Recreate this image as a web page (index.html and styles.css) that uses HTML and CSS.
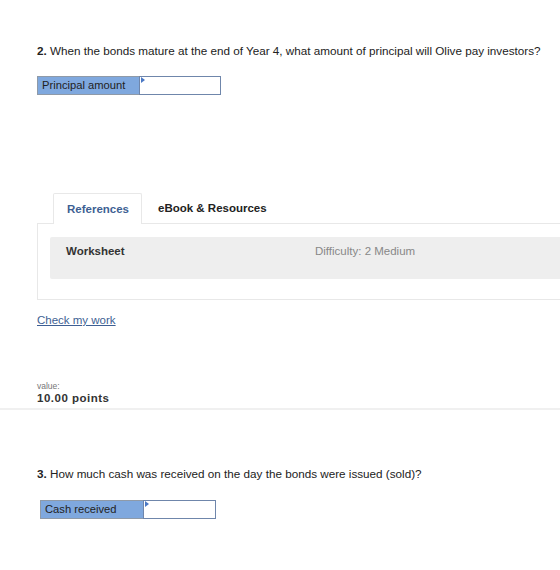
FILE: index.html
```html
<!DOCTYPE html>
<html lang="en">

<head>
    <meta charset="UTF-8">
    <meta name="viewport" content="width=device-width, initial-scale=1.0">

    <title>Bonds - Question 2</title>

    <link rel="stylesheet" href="styles.css">
</head>

<body>
    <main>
        <section class="question q2">
            <p class="prompt"><b>2.</b> When the bonds mature at the end of Year 4, what amount of principal will Olive pay investors?</p>

            <div class="answer">
                <span class="answer-label">Principal amount</span>
                <span class="field"><input type="text" class="answer-input"></span>
            </div>
        </section>

        <div class="tabs">
            <span class="tab active">References</span>
            <span class="tab">eBook &amp; Resources</span>
        </div>

        <div class="panel">
            <div class="ref-row">
                <span class="ref-name">Worksheet</span>
                <span class="ref-level">Difficulty: 2 Medium</span>
            </div>
        </div>

        <a href="#" class="check">Check my work</a>

        <div class="value">
            <p class="value-label">value:</p>
            <p class="points">10.00 points</p>
        </div>
    </main>

    <hr class="divider">

    <main>
        <section class="question q3">
            <p class="prompt"><b>3.</b> How much cash was received on the day the bonds were issued (sold)?</p>

            <div class="answer shifted">
                <span class="answer-label">Cash received</span>
                <span class="field small"><input type="text" class="answer-input"></span>
            </div>
        </section>
    </main>
</body>

</html>
```

FILE: styles.css
```css
* {
    margin: 0;
    padding: 0;
    box-sizing: border-box;
}

body {
    font-family: "Liberation Sans", Arial, sans-serif;
    color: #222;
    background-color: white;
}

main {
    padding-left: 37px;
}

.prompt {
    font-size: 11.7px;
    line-height: 14px;
}

.q2 {
    padding-top: 44px;
}

.q3 {
    padding-top: 57px;
}

.answer {
    display: flex;
    margin-top: 18px;
    height: 19px;
}

.answer.shifted {
    margin-top: 19px;
    margin-left: 3px;
}

.answer-label {
    width: 102px;
    height: 19px;

    background-color: #7fa8de;
    border: solid 1px #8f9aa8;
    border-right: none;

    font-size: 11.2px;
    line-height: 17px;
    padding-left: 4px;
}

.q3 .answer-label {
    width: 103px;
}

.field {
    position: relative;
    display: block;
    width: 82px;
    height: 19px;
}

.field.small {
    width: 73px;
}

/* little blue marker in the corner of the input */
.field::before {
    content: "";
    position: absolute;
    left: 2px;
    top: 1px;
    border-top: solid 3px transparent;
    border-bottom: solid 3px transparent;
    border-left: solid 4px #4a78c4;
}

.answer-input {
    width: 100%;
    height: 100%;

    border: solid 1.5px #6f86ab;
    background-color: white;
    outline: none;
}

.tabs {
    display: flex;
    margin-top: 98px;
    padding-left: 16px;
    height: 30px;
}

.tab {
    font-size: 11.5px;
    font-weight: bold;
    line-height: 31px;
    padding: 0 16px;
    color: #222;
}

.tab.active {
    width: 89px;
    padding: 0 13px;
    color: #3e5f93;
    line-height: 30px;

    background-color: white;
    border: solid 1px #e8e8e8;
    border-bottom: none;
    border-radius: 2px 2px 0 0;
    margin-bottom: -1px;
    position: relative;
}

.panel {
    border: solid 1px #e8e8e8;
    border-right: none;
    padding: 13px 0 20px 12px;
}

.ref-row {
    display: flex;
    height: 42px;
    padding: 7px 0 0 16px;

    background-color: #eeeeee;
    border-radius: 2px 0 0 2px;

    font-size: 11.5px;
    line-height: 14px;
}

.ref-name {
    width: 249px;
    font-weight: bold;
    color: #333;
}

.ref-level {
    color: #888;
}

.check {
    display: inline-block;
    margin-top: 13px;

    font-size: 11.5px;
    line-height: 14px;
    color: #3e5f93;
}

.value {
    margin-top: 53px;
}

.value-label {
    font-size: 8.5px;
    line-height: 10px;
    color: #777;
}

.points {
    font-size: 11.5px;
    line-height: 14px;
    font-weight: bold;
    letter-spacing: 0.5px;
    color: #333;
}

.divider {
    border: none;
    border-top: solid 2px #f0f0f0;
    margin-top: 3px;
}
```
